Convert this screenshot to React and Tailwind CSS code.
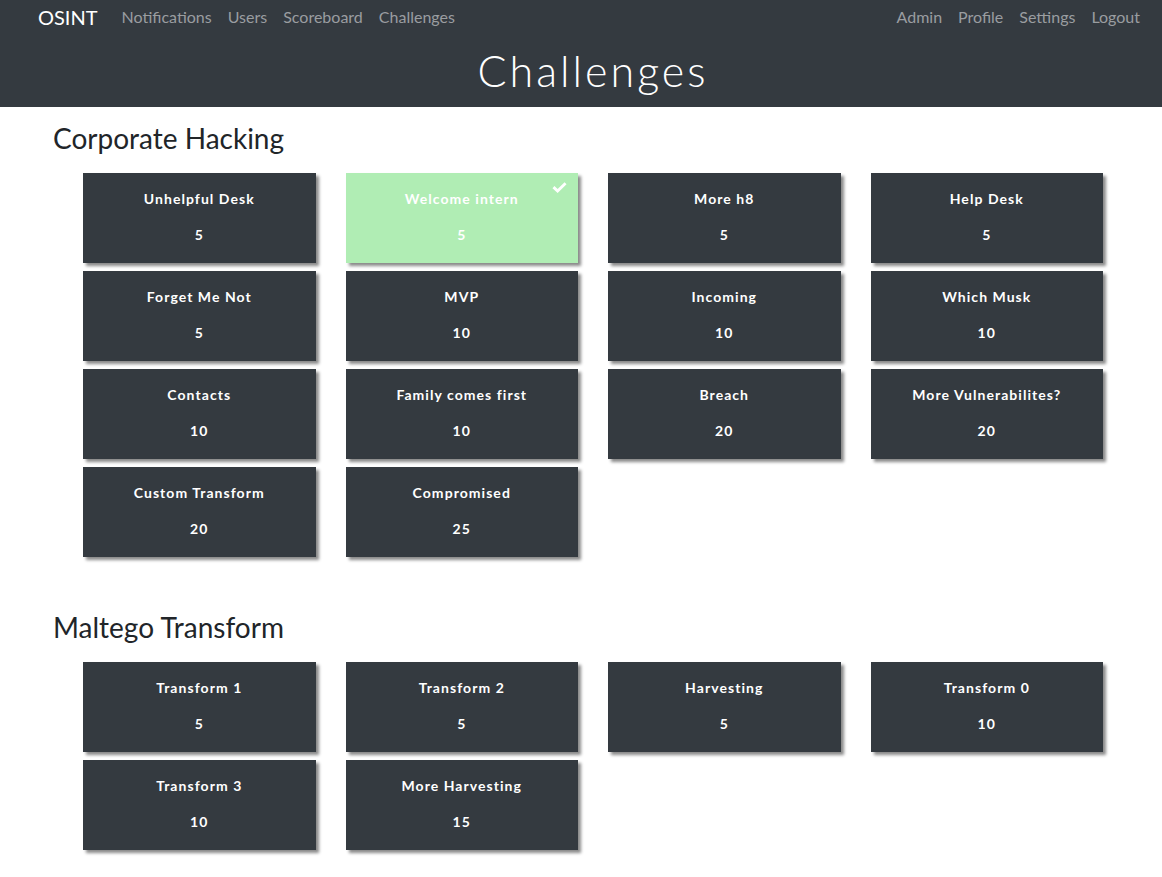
import React from 'react';

const sections = [
    {
        name: 'Corporate Hacking',
        challenges: [
            { name: 'Unhelpful Desk', value: 5 },
            { name: 'Welcome intern', value: 5, solved: true },
            { name: 'More h8', value: 5 },
            { name: 'Help Desk', value: 5 },
            { name: 'Forget Me Not', value: 5 },
            { name: 'MVP', value: 10 },
            { name: 'Incoming', value: 10 },
            { name: 'Which Musk', value: 10 },
            { name: 'Contacts', value: 10 },
            { name: 'Family comes first', value: 10 },
            { name: 'Breach', value: 20 },
            { name: 'More Vulnerabilites?', value: 20 },
            { name: 'Custom Transform', value: 20 },
            { name: 'Compromised', value: 25 },
        ],
    },
    {
        name: 'Maltego Transform',
        challenges: [
            { name: 'Transform 1', value: 5 },
            { name: 'Transform 2', value: 5 },
            { name: 'Harvesting', value: 5 },
            { name: 'Transform 0', value: 10 },
            { name: 'Transform 3', value: 10 },
            { name: 'More Harvesting', value: 15 },
        ],
    },
];

const ChallengeCard = ({ name, value, solved }) => (
    <div
        className={`relative h-[90px] flex flex-col items-center pt-[17px] text-white font-bold text-[14px] tracking-[0.075em] shadow-[3px_3px_3px_#8a8a8a] ${
            solved ? 'bg-[#b0edb4]' : 'bg-[#343a40]'
        }`}
    >
        {solved && (
            <svg className="absolute top-[8px] right-[11px] w-[15px] h-[13px]" viewBox="0 0 16 13" fill="white">
                <path d="M0.5 7.2 L2.6 5 L6 8.2 L13.4 0.8 L15.5 3 L6 12.3 Z" />
            </svg>
        )}
        <div className="leading-[18px]">{name}</div>
        <div className="leading-[18px] mt-[18px]">{value}</div>
    </div>
);

export default function App() {
    return (
        <div className="min-h-[877px] bg-white font-['Lato','Open_Sans',sans-serif] text-[#212529]">
            {/* Navbar */}
            <nav className="bg-[#343a40] h-[35px] flex items-center justify-between pl-[38px] pr-[22px] pb-[2px]">
                <div className="flex items-center">
                    <span className="text-white text-[20px] mr-[24px]">OSINT</span>
                    <div className="flex gap-[16px] text-[16px] text-[#9a9da0]">
                        <span>Notifications</span>
                        <span>Users</span>
                        <span>Scoreboard</span>
                        <span>Challenges</span>
                    </div>
                </div>
                <div className="flex gap-[16px] text-[16px] text-[#9a9da0]">
                    <span>Admin</span>
                    <span>Profile</span>
                    <span>Settings</span>
                    <span>Logout</span>
                </div>
            </nav>

            {/* Jumbotron */}
            <div className="bg-[#343a40] h-[72px] flex items-start justify-center pl-[24px]">
                <h1 className="text-white text-[43px] font-light tracking-[0.07em] leading-[74px] -mt-[1px]">Challenges</h1>
            </div>

            {/* Sections */}
            <div className="pl-[53px] pr-[59px] pb-[20px]">
                {sections.map((section, i) => (
                    <div key={section.name} className={i === 0 ? 'pt-[13px]' : 'pt-[52px]'}>
                        <h2 className="text-[28px] leading-[36px] mb-[17px]">{section.name}</h2>
                        <div className="ml-[30px] grid grid-cols-4 gap-x-[30px] gap-y-[8px]">
                            {section.challenges.map((c) => (
                                <ChallengeCard key={c.name} {...c} />
                            ))}
                        </div>
                    </div>
                ))}
            </div>
        </div>
    );
}
